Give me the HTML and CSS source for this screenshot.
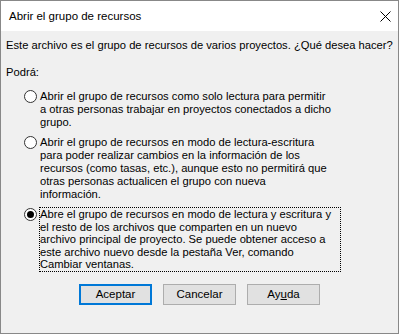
FILE: index.html
```html
<!DOCTYPE html>
<html lang="es">
<head>
    <meta charset="UTF-8">
    <title>Abrir el grupo de recursos</title>
    <link rel="stylesheet" href="styles.css">
</head>
<body>
    <div class="dialog">
        <div class="titlebar">
            <span class="title">Abrir el grupo de recursos</span>
            <svg class="close" width="11" height="11" viewBox="0 0 11 11">
                <path d="M0.5 0.5 L10.5 10.5 M10.5 0.5 L0.5 10.5" stroke="#000" stroke-width="1" fill="none"/>
            </svg>
        </div>

        <div class="content">
            <p class="intro">Este archivo es el grupo de recursos de varios proyectos. ¿Qué desea hacer?</p>
            <p class="caption">Podrá:</p>

            <div class="option">
                <svg class="radio" width="13" height="13" viewBox="0 0 13 13">
                    <circle cx="6.5" cy="6.5" r="6" fill="#fff" stroke="#333"/>
                </svg>
                <div class="option-text">Abrir el grupo de recursos como solo lectura para permitir<br>a otras personas trabajar en proyectos conectados a dicho<br>grupo.</div>
            </div>

            <div class="option">
                <svg class="radio" width="13" height="13" viewBox="0 0 13 13">
                    <circle cx="6.5" cy="6.5" r="6" fill="#fff" stroke="#333"/>
                </svg>
                <div class="option-text">Abrir el grupo de recursos en modo de lectura-escritura<br>para poder realizar cambios en la información de los<br>recursos (como tasas, etc.), aunque esto no permitirá que<br>otras personas actualicen el grupo con nueva<br>información.</div>
            </div>

            <div class="option selected">
                <svg class="radio" width="13" height="13" viewBox="0 0 13 13">
                    <circle cx="6.5" cy="6.5" r="6" fill="#fff" stroke="#333"/>
                    <circle cx="6.5" cy="6.5" r="3.5" fill="#000"/>
                </svg>
                <div class="option-text">Abre el grupo de recursos en modo de lectura y escritura y<br>el resto de los archivos que comparten en un nuevo<br>archivo principal de proyecto. Se puede obtener acceso a<br>este archivo nuevo desde la pestaña Ver, comando<br>Cambiar ventanas.</div>
            </div>

            <div class="buttons">
                <button class="btn default">Aceptar</button>
                <button class="btn">Cancelar</button>
                <button class="btn">Ay<u>u</u>da</button>
            </div>
        </div>
    </div>
</body>
</html>
```

FILE: styles.css
```css
body {
    margin: 0;
    padding: 0;
    background-color: #fff;
    font-family: "Liberation Sans", Arial, sans-serif;
    font-size: 11.2px;
    color: #000;
}

.dialog {
    width: 399px;
    height: 334px;
    box-sizing: border-box;
    border: 1px solid #888;
    display: flex;
    flex-direction: column;
    background-color: #f0f0f0;
}

.titlebar {
    height: 30px;
    background-color: #fff;
    display: flex;
    align-items: center;
    justify-content: space-between;
    padding: 0 7px 0 8px;
}

.title {
    font-size: 11.5px;
}

.content {
    flex: 1;
    padding: 7px 5px 0 5px;
}

.intro,
.caption {
    margin: 0;
    line-height: 14px;
}

.caption {
    margin-top: 13px;
}

.option {
    display: flex;
    align-items: flex-start;
    margin-top: 5px;
    padding-left: 18px;
}

.option:first-of-type {
    margin-top: 10px;
}

.radio {
    flex: none;
    margin-top: 1px;
    margin-right: 2px;
}

.option-text {
    width: 300px;
    line-height: 13px;
    border: 1px solid transparent;
    white-space: nowrap;
}

.selected .option-text {
    border: 1px dotted #000;
    line-height: 12.6px;
}

.buttons {
    display: flex;
    justify-content: center;
    gap: 11px;
    margin-top: 12px;
}

.btn {
    width: 73px;
    height: 21px;
    padding: 0;
    font-family: inherit;
    font-size: 11.5px;
    color: #000;
    background-color: #e1e1e1;
    border: 1px solid #adadad;
}

.btn.default {
    border: 2px solid #0078d7;
}
```
